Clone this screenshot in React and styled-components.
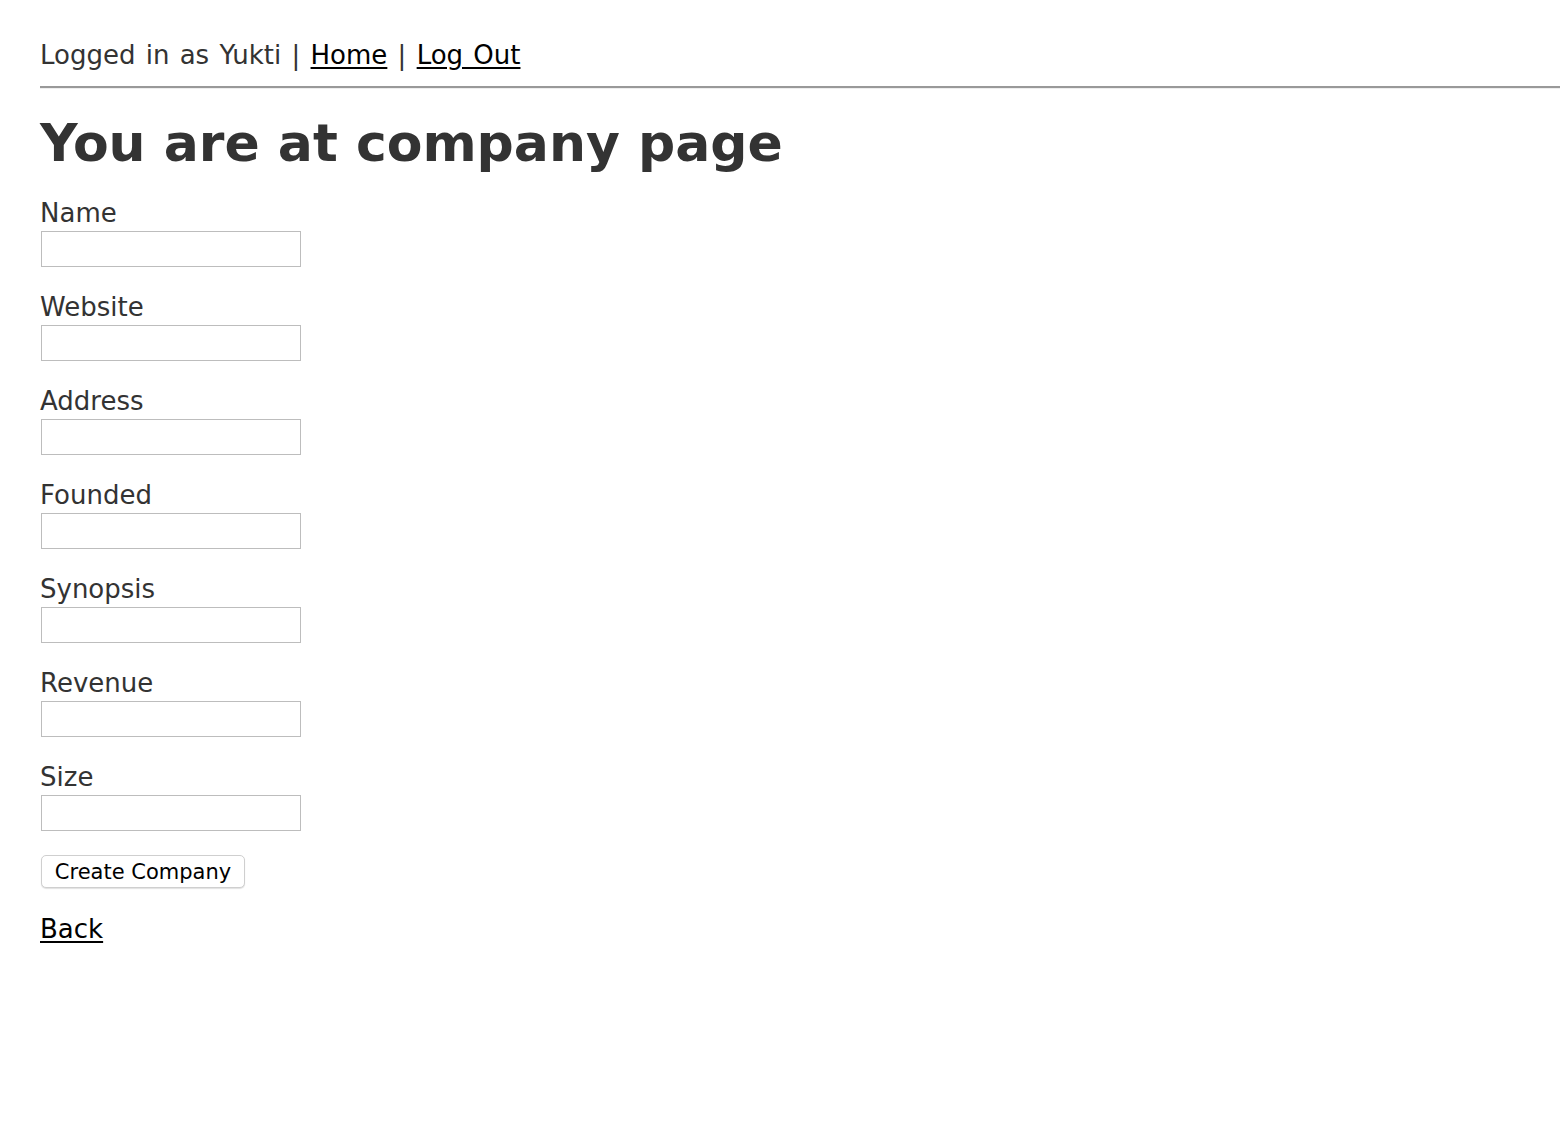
import React from "react";
import styled, { createGlobalStyle } from "styled-components";

const GlobalStyle = createGlobalStyle`
  html, body {
    margin: 0;
    background: #fff;
  }
  body {
    padding: 37px 0 0 40px;
    color: #333;
    font-family: "DejaVu Sans", Verdana, sans-serif;
    font-size: 26px;
    line-height: 36px;
  }
`;

const TopBar = styled.p`
  margin: 0;
  word-spacing: 2px;
`;

const Link = styled.a`
  color: #000;
  text-decoration: underline;
  text-underline-offset: 3px;
`;

const Rule = styled.div`
  margin-top: 13px;
  height: 2px;
  background: #999;
  border-bottom: 1px solid #eee;
`;

const Title = styled.h1`
  margin: 22px 0 20px;
  font-size: 52px;
  line-height: 64px;
  font-weight: bold;
`;

const Form = styled.form`
  display: flex;
  flex-direction: column;
  align-items: flex-start;
`;

const Field = styled.div`
  display: flex;
  flex-direction: column;
  align-items: flex-start;
  margin-bottom: 22px;
`;

const Label = styled.label`
  display: block;
  height: 36px;
`;

const Input = styled.input`
  box-sizing: border-box;
  width: 260px;
  height: 36px;
  margin: 0 0 0 1px;
  border: 1px solid #bdbdbd;
  background: #fff;
  font: inherit;
`;

const Button = styled.button`
  box-sizing: border-box;
  width: 204px;
  height: 33px;
  padding: 0;
  margin: 2px 0 0 1px;
  border: 1px solid #cfcfcf;
  border-radius: 5px;
  background: #fff;
  color: #000;
  font-family: "DejaVu Sans", sans-serif;
  font-size: 21px;
  box-shadow: 0 1px 1px rgba(0, 0, 0, 0.12);
`;

const Back = styled(Link)`
  display: inline-block;
  margin-top: 23px;
`;

const fields = ["Name", "Website", "Address", "Founded", "Synopsis", "Revenue", "Size"];

export default function App() {
  return (
    <>
      <GlobalStyle />
      <TopBar>
        Logged in as Yukti | <Link href="#">Home</Link> | <Link href="#">Log Out</Link>
      </TopBar>
      <Rule />
      <Title>You are at company page</Title>
      <Form onSubmit={e => e.preventDefault()}>
        {fields.map(f => (
          <Field key={f}>
            <Label htmlFor={f}>{f}</Label>
            <Input id={f} type="text" />
          </Field>
        ))}
        <Button type="submit">Create Company</Button>
      </Form>
      <Back href="#">Back</Back>
    </>
  );
}
